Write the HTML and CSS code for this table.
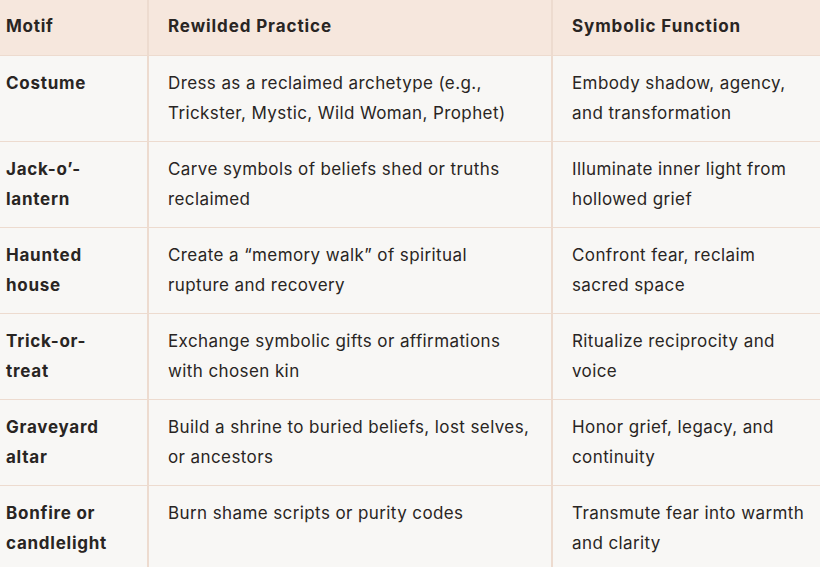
FILE: index.html
```html
<!DOCTYPE html>
<html>
<head>
<meta charset="utf-8">
<link rel="stylesheet" href="styles.css">
</head>
<body>
<table class="motifs">
  <colgroup>
    <col class="c1"><col class="c2"><col class="c3">
  </colgroup>
  <thead>
    <tr><th>Motif</th><th>Rewilded Practice</th><th>Symbolic Function</th></tr>
  </thead>
  <tbody>
    <tr><td>Costume</td><td>Dress as a reclaimed archetype (e.g., Trickster, Mystic, Wild Woman, Prophet)</td><td>Embody shadow, agency, and transformation</td></tr>
    <tr><td>Jack-o’-lantern</td><td>Carve symbols of beliefs shed or truths reclaimed</td><td>Illuminate inner light from hollowed grief</td></tr>
    <tr><td>Haunted house</td><td>Create a “memory walk” of spiritual rupture and recovery</td><td>Confront fear, reclaim sacred space</td></tr>
    <tr><td>Trick-or-treat</td><td>Exchange symbolic gifts or affirmations with chosen kin</td><td>Ritualize reciprocity and voice</td></tr>
    <tr><td>Graveyard altar</td><td>Build a shrine to buried beliefs, lost selves, or ancestors</td><td>Honor grief, legacy, and continuity</td></tr>
    <tr><td>Bonfire or candlelight</td><td>Burn shame scripts or purity codes</td><td>Transmute fear into warmth and clarity</td></tr>
  </tbody>
</table>
</body>
</html>
```
FILE: styles.css
```css
html, body {
  margin: 0;
  padding: 0;
  background: #f8f7f5;
}
body {
  width: 820px;
  height: 567px;
  overflow: hidden;
}
.motifs {
  border-collapse: collapse;
  table-layout: fixed;
  width: 834px;
  font-family: Inter, "Noto Sans", sans-serif;
  font-size: 17px;
  letter-spacing: 0.4px;
  line-height: 30px;
  color: #292523;
  background: #f8f7f5;
}
.c1 { width: 148px; }
.c2 { width: 404px; }
.c3 { width: 282px; }
.motifs th, .motifs td {
  text-align: left;
  vertical-align: top;
  padding: 12px 20px 13px 19px;
  border-bottom: 1px solid #eddbcf;
  border-right: 2px solid #eddbcf;
}
.motifs th:first-child, .motifs td:first-child {
  padding-left: 6px;
  font-weight: 700;
  letter-spacing: 0.75px;
}
.motifs th {
  background: #f6e7dd;
  font-weight: 700;
  letter-spacing: 0.9px;
  padding-top: 11px;
  padding-bottom: 14px;
}
.motifs td {
  font-weight: 400;
}
```
